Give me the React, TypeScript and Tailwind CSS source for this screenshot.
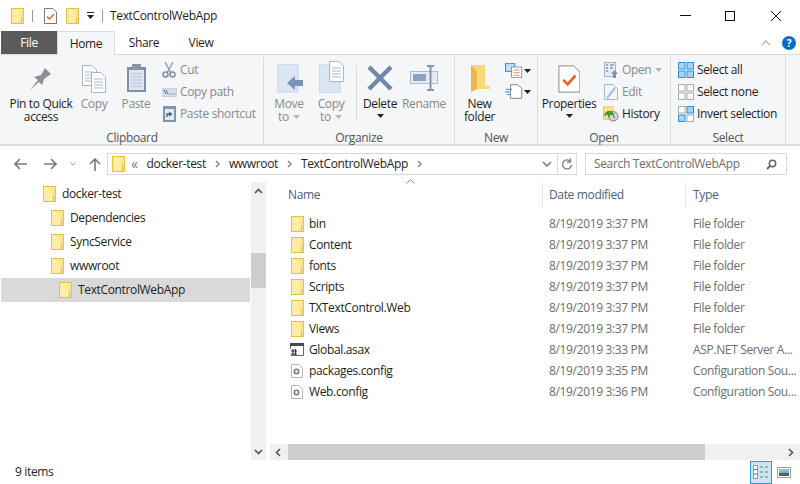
import type { ReactNode } from 'react';

// Explorer window, TextControlWebApp folder

function Folder({ className = '' }: { className?: string }) {
  return (
    <svg width="13" height="16" viewBox="0 0 13 16" className={`shrink-0 ${className}`}>
      <rect x="0.5" y="0.5" width="12" height="15" fill="#fde58f" stroke="#e8c23e" />
      <rect x="1" y="1" width="8" height="14" fill="#fff0b5" opacity="0.6" />
      <path d="M10.5 15V10.5H12.5" fill="none" stroke="#e8c23e" />
    </svg>
  );
}

function Caret({ light }: { light?: boolean }) {
  return (
    <svg width="7" height="4" viewBox="0 0 7 4" className="shrink-0">
      <path d="M0 0H7L3.5 4Z" fill={light ? '#b5b5b5' : '#222'} />
    </svg>
  );
}

function PropsIcon({ size = 1 }: { size?: number }) {
  return (
    <svg width={13 * size} height={16 * size} viewBox="0 0 13 16" className="shrink-0">
      <path d="M.5.5H9L12.5 4V15.5H.5Z" fill="#fff" stroke="#7b7b7b" strokeWidth={size > 1 ? 0.5 : 1} />
      <path d="M3 8.5L5.5 11L10 6" fill="none" stroke="#e8622a" strokeWidth="1.5" />
    </svg>
  );
}

function Sep() {
  return <div className="w-px h-[12px] bg-[#9a9a9a] shrink-0" />;
}

function Doc({ x, y }: { x: number; y: number }) {
  return (
    <g transform={`translate(${x} ${y})`}>
      <path d="M.5.5H10L14.5 5V20.5H.5Z" fill="#fff" stroke="#aab4c2" />
      <path d="M3 7H12M3 10H12M3 13H12M3 16H12" stroke="#aab8cc" />
    </g>
  );
}

function BigTool({
  icon,
  label,
  width,
  dim,
  caret,
}: {
  icon: ReactNode;
  label: ReactNode;
  width: number;
  dim?: boolean;
  caret?: boolean;
}) {
  return (
    <div className="flex flex-col items-center shrink-0" style={{ width }}>
      <div className="h-[34px] flex items-end justify-center">{icon}</div>
      <div className={`mt-[4px] text-center leading-[13px] ${dim ? 'text-[#8a8a8a]' : 'text-[#1e1e1e]'}`}>{label}</div>
      {caret && (
        <div className="h-[12px] flex items-center">
          <Caret />
        </div>
      )}
    </div>
  );
}

function SmallTool({ icon, label, dim }: { icon: ReactNode; label: ReactNode; dim?: boolean }) {
  return (
    <div className={`h-[22px] flex items-center gap-[3px] whitespace-nowrap ${dim ? 'text-[#8a8a8a]' : 'text-[#1e1e1e]'}`}>
      <div className="w-[16px] h-[16px] flex items-center justify-center shrink-0">{icon}</div>
      {label}
    </div>
  );
}

function Group({ label, width, children }: { label: string; width: number; children: ReactNode }) {
  return (
    <div className="flex flex-col shrink-0 border-r border-[#dadbdc] h-[88px] mt-[2px]" style={{ width }}>
      <div className="flex-1 flex items-start pt-[2px] min-h-0">{children}</div>
      <div className="h-[16px] leading-[16px] pt-px text-center text-[#555]">{label}</div>
    </div>
  );
}

function SelectGlyph({ cells }: { cells: boolean[] }) {
  return (
    <svg width="16" height="16" viewBox="0 0 16 16">
      {[
        [0, 0],
        [8.5, 0],
        [0, 8.5],
        [8.5, 8.5],
      ].map(([x, y], i) => (
        <rect
          key={i}
          x={x + 0.5}
          y={y + 0.5}
          width="6.5"
          height="6.5"
          fill={cells[i] ? '#a9d3f5' : '#fff'}
          stroke={cells[i] ? '#2f8fdc' : '#aaa'}
        />
      ))}
    </svg>
  );
}

function Ribbon() {
  return (
    <div className="h-[92px] bg-[#f5f6f7] border-t border-b-2 border-[#dadbdc] flex pl-px shrink-0">
      <Group label="Clipboard" width={263}>
        <div className="flex items-start">
          <div className="w-[4px]" />
          <BigTool
            width={72}
            label={
              <>
                Pin to Quick
                <br />
                access
              </>
            }
            icon={
              <svg width="22" height="24" viewBox="0 0 22 24" className="mb-[2px]">
                <path d="M0 23L8 13L4 10L11 8L15 1L21 7L14 12L12 18L9 15Z" fill="#8c9197" />
              </svg>
            }
          />
          <BigTool
            width={34}
            dim
            label="Copy"
            icon={
              <svg width="25" height="28" viewBox="0 0 25 28">
                <Doc x={0} y={0} />
                <Doc x={9} y={7} />
              </svg>
            }
          />
          <div className="w-[5px]" />
          <BigTool
            width={40}
            dim
            label="Paste"
            icon={
              <svg width="21" height="29" viewBox="0 0 21 29">
                <rect x="1" y="3" width="19" height="25" fill="#7d90a8" />
                <rect x="3" y="6" width="15" height="20" fill="#dfe6f1" />
                <rect x="6" y="0" width="9" height="6" fill="#8c96a3" />
                <path d="M5 10H16M5 13H16M5 16H16M5 19H16M5 22H16" stroke="#b7c4d8" />
              </svg>
            }
          />
          <div className="flex flex-col pl-[5px]">
            <SmallTool
              dim
              label="Cut"
              icon={
                <svg width="14" height="16" viewBox="0 0 14 16">
                  <path d="M3 0L9 11M11 0L5 11" stroke="#99a0a9" strokeWidth="1.5" />
                  <circle cx="3.5" cy="12.5" r="2.5" fill="none" stroke="#7c90ad" strokeWidth="1.5" />
                  <circle cx="10.5" cy="12.5" r="2.5" fill="none" stroke="#7c90ad" strokeWidth="1.5" />
                </svg>
              }
            />
            <SmallTool
              dim
              label="Copy path"
              icon={
                <svg width="15" height="9" viewBox="0 0 15 9">
                  <rect width="15" height="9" fill="#d2dcec" stroke="#b9c5d8" />
                  <path d="M2 2L4 6M4 2L6 6M7.5 6H8.5M10 6H11M12.5 6H13.5" stroke="#5c6c86" />
                </svg>
              }
            />
            <SmallTool
              dim
              label="Paste shortcut"
              icon={
                <svg width="13" height="16" viewBox="0 0 13 16">
                  <rect width="13" height="16" y="0" fill="#8095ae" />
                  <rect x="2" y="3" width="9" height="11" fill="#e4eaf3" />
                  <rect x="4" y="0" width="5" height="3" fill="#8a94a2" />
                  <path d="M4 11V8H7.5M6 6.5L8.5 8L6 10" fill="none" stroke="#46607f" strokeWidth="1.3" />
                </svg>
              }
            />
          </div>
        </div>
      </Group>
      <Group label="Organize" width={191}>
        <div className="flex items-start">
          <div className="w-[2px]" />
          <BigTool
            width={46}
            dim
            label={
              <span className="inline-flex flex-col items-center">
                Move
                <span className="flex items-center gap-[4px]">
                  to
                  <Caret light />
                </span>
              </span>
            }
            icon={
              <svg width="27" height="29" viewBox="0 0 27 29" className="ml-[3px]">
                <rect x="0" y="0" width="21" height="28" fill="#dbe5f3" stroke="#c5d3e6" />
                <path d="M10 19L18 12V16H26V22H18V26Z" fill="#7b93b4" />
              </svg>
            }
          />
          <BigTool
            width={38}
            dim
            label={
              <span className="inline-flex flex-col items-center">
                Copy
                <span className="flex items-center gap-[4px]">
                  to
                  <Caret light />
                </span>
              </span>
            }
            icon={
              <svg width="27" height="32" viewBox="0 0 27 32" className="ml-[2px]">
                <rect x="0" y="4" width="21" height="28" fill="#dbe5f3" stroke="#c5d3e6" />
                <Doc x={10} y={0} />
              </svg>
            }
          />
          <div className="w-[12px] flex justify-center pt-[6px]">
            <div className="w-px h-[56px] bg-[#dadbdc]" />
          </div>
          <BigTool
            width={36}
            label="Delete"
            caret
            icon={
              <svg width="26" height="26" viewBox="0 0 26 26" className="mb-[2px]">
                <path d="M2 2L24 24M24 2L2 24" stroke="#7388a8" strokeWidth="4.5" />
              </svg>
            }
          />
          <BigTool
            width={52}
            dim
            label="Rename"
            icon={
              <svg width="28" height="26" viewBox="0 0 28 26" className="mb-[2px]">
                <rect x="0.5" y="6.5" width="27" height="12" fill="#e3ebf5" stroke="#aebcd0" />
                <rect x="3" y="9" width="13" height="7" fill="#8da2c0" />
                <path d="M17 1H24M20.5 1V25M17 25H24" stroke="#8296b4" strokeWidth="2" />
              </svg>
            }
          />
        </div>
      </Group>
      <Group label="New" width={83}>
        <div className="flex items-start">
          <BigTool
            width={49}
            label={
              <>
                New
                <br />
                folder
              </>
            }
            icon={
              <svg width="20" height="29" viewBox="0 0 20 29" className="ml-[2px]">
                <path d="M0 1H14V22L19 22V25H6L0 28Z" fill="#fbd976" />
                <path d="M0 1L6 7V25L0 28Z" fill="#e9b84c" />
              </svg>
            }
          />
          <div className="flex flex-col gap-[6px] pt-[4px] pl-[1px]">
            <div className="flex items-center gap-[1px]">
              <svg width="18" height="15" viewBox="0 0 21 17">
                <rect x="0.5" y="0.5" width="11" height="9" fill="#bfe0f8" stroke="#2e7fc1" />
                <rect x="7.5" y="4.5" width="12" height="12" fill="#fff" stroke="#888" />
                <path d="M10 8H17M10 11H17M10 14H17" stroke="#d67a7a" />
              </svg>
              <Caret />
            </div>
            <div className="flex items-center gap-[1px]">
              <svg width="18" height="15" viewBox="0 0 21 17">
                <path d="M6.5.5H15L19.5 5V16.5H6.5Z" fill="#fff" stroke="#777" />
                <path d="M1 6H8M0 9H6M2 12H6" stroke="#2e7fc1" />
              </svg>
              <Caret />
            </div>
          </div>
        </div>
      </Group>
      <Group label="Open" width={133}>
        <div className="flex items-start">
          <BigTool width={62} label="Properties" caret icon={<PropsIcon size={1.75} />} />
          <div className="flex flex-col pl-[3px]">
            <SmallTool
              dim
              label={
                <span className="flex items-center gap-[4px]">
                  Open
                  <Caret light />
                </span>
              }
              icon={
                <svg width="14" height="16" viewBox="0 0 14 16">
                  <rect x="0.5" y="0.5" width="11" height="14" fill="#e6ecf5" stroke="#aab4c4" />
                  <path d="M2 3H4M2 6H4M2 9H4M6 3H10M6 6H9" stroke="#8296b4" strokeWidth="1.5" />
                  <path d="M7 12L10.5 8L14 12H12V16H9V12Z" fill="#7c91b1" />
                </svg>
              }
            />
            <SmallTool
              dim
              label="Edit"
              icon={
                <svg width="14" height="16" viewBox="0 0 14 16">
                  <path d="M.5.5H9L13.5 5V15.5H.5Z" fill="#f3f6fb" stroke="#aab4c4" />
                  <path d="M3 14L11 4" stroke="#a9c2e2" strokeWidth="2.5" />
                </svg>
              }
            />
            <SmallTool
              label="History"
              icon={
                <svg width="17" height="16" viewBox="0 0 17 16">
                  <rect x="0.5" y="0.5" width="10" height="13" fill="#fde58f" stroke="#e8c23e" />
                  <circle cx="11" cy="10.5" r="5" fill="#d5d5d5" stroke="#777" />
                  <path d="M11 7.5V10.5L13 12" fill="none" stroke="#555" />
                  <path d="M2 10A5 5 0 0 1 9 6L10 8L5 8L7 11" fill="none" stroke="#3f9a2f" strokeWidth="2" />
                </svg>
              }
            />
          </div>
        </div>
      </Group>
      <Group label="Select" width={115}>
        <div className="flex flex-col pl-[7px]">
          <SmallTool label="Select all" icon={<SelectGlyph cells={[true, true, true, true]} />} />
          <SmallTool label="Select none" icon={<SelectGlyph cells={[false, false, false, false]} />} />
          <SmallTool label="Invert selection" icon={<SelectGlyph cells={[false, true, true, false]} />} />
        </div>
      </Group>
    </div>
  );
}

function Crumb({ label }: { label: string }) {
  return (
    <>
      <span className="mx-[9px] text-[#1e1e1e]">{label}</span>
      <svg width="5" height="8" viewBox="0 0 5 8" className="shrink-0">
        <path d="M1 1L4 4L1 7" fill="none" stroke="#808080" strokeWidth="1.4" />
      </svg>
    </>
  );
}

function NavBar() {
  return (
    <div className="h-[32px] flex items-center shrink-0 pl-[14px] pt-[4px]">
      <svg width="13" height="12" viewBox="0 0 13 12" className="shrink-0">
        <path d="M6 1L1 6L6 11M1 6H13" fill="none" stroke="#7a7a7a" strokeWidth="1.6" />
      </svg>
      <svg width="13" height="12" viewBox="0 0 13 12" className="ml-[17px] shrink-0">
        <path d="M7 1L12 6L7 11M12 6H0" fill="none" stroke="#7a7a7a" strokeWidth="1.6" />
      </svg>
      <svg width="6" height="4" viewBox="0 0 6 4" className="ml-[13px] shrink-0">
        <path d="M.5.5L3 3L5.5.5" fill="none" stroke="#9a9a9a" />
      </svg>
      <svg width="12" height="13" viewBox="0 0 12 13" className="ml-[13px] shrink-0">
        <path d="M1 6L6 1L11 6M6 1V13" fill="none" stroke="#7a7a7a" strokeWidth="1.6" />
      </svg>
      <div className="ml-[6px] w-[470px] h-[22px] border border-[#d9d9d9] flex items-center pl-[4px]">
        <Folder />
        <span className="ml-[6px] text-[#777] text-[14px] leading-none">«</span>
        <Crumb label="docker-test" />
        <Crumb label="wwwroot" />
        <Crumb label="TextControlWebApp" />
        <div className="flex-1" />
        <svg width="10" height="6" viewBox="0 0 10 6" className="shrink-0 mr-[3px]">
          <path d="M1 1L5 5L9 1" fill="none" stroke="#707070" strokeWidth="1.4" />
        </svg>
        <div className="w-px h-full bg-[#d9d9d9] ml-[2px]" />
        <svg width="12" height="13" viewBox="0 0 12 13" className="mx-[3px] shrink-0">
          <path d="M9.5 3.5A4.5 4.5 0 1 0 10.5 7M9.5 0.5V4H6" fill="none" stroke="#808080" strokeWidth="1.4" />
        </svg>
      </div>
      <div className="ml-[8px] w-[202px] h-[22px] border border-[#d9d9d9] flex items-center justify-between pl-[8px] pr-[9px] text-[#6d6d6d]">
        <span>Search TextControlWebApp</span>
        <svg width="11" height="11" viewBox="0 0 11 11" className="shrink-0">
          <circle cx="6.5" cy="4.5" r="3.2" fill="none" stroke="#666" strokeWidth="1.5" />
          <path d="M4 7L1 10" stroke="#666" strokeWidth="2" />
        </svg>
      </div>
    </div>
  );
}

const tree = [
  { name: 'docker-test', pad: 43 },
  { name: 'Dependencies', pad: 51 },
  { name: 'SyncService', pad: 51 },
  { name: 'wwwroot', pad: 51 },
  { name: 'TextControlWebApp', pad: 59, active: true },
];

function TreePane() {
  return (
    <div className="w-[266px] flex shrink-0">
      <div className="w-[250px] pt-[4px] pl-px">
        {tree.map((t) => (
          <div
            key={t.name}
            className={`h-[24px] flex items-center gap-[6px] text-[#1e1e1e] ${t.active ? 'bg-[#d9d9d9]' : ''}`}
            style={{ paddingLeft: t.pad - 1 }}
          >
            <Folder />
            {t.name}
          </div>
        ))}
      </div>
      <div className="w-[15px] ml-px mt-[4px] bg-[#f0f0f0] flex flex-col items-center">
        <svg width="9" height="6" viewBox="0 0 9 6" className="mt-[6px] shrink-0">
          <path d="M1 5L4.5 1.5L8 5" fill="none" stroke="#555" strokeWidth="1.6" />
        </svg>
        <div className="w-full h-[35px] bg-[#cdcdcd] mt-[59px]" />
        <div className="flex-1" />
        <svg width="9" height="6" viewBox="0 0 9 6" className="mb-[5px] shrink-0">
          <path d="M1 1L4.5 4.5L8 1" fill="none" stroke="#555" strokeWidth="1.6" />
        </svg>
      </div>
    </div>
  );
}

function FileIcon({ kind }: { kind: string }) {
  if (kind === 'folder') return <Folder />;
  if (kind === 'asax')
    return (
      <svg width="14" height="13" viewBox="0 0 14 13" className="shrink-0 -ml-[1px]">
        <path d="M.5 12.5H13.5V.5H.5V6" fill="#fff" stroke="#666" />
        <rect x="0" y="0" width="14" height="3" fill="#4a4a4a" />
        <path d="M1 8H7M1 11H7M3 6V12M5.5 6V12" stroke="#333" strokeWidth="1.1" />
      </svg>
    );
  return (
    <svg width="12" height="14" viewBox="0 0 12 14" className="shrink-0 mr-px">
      <path d="M.5.5H8L11.5 4V13.5H.5Z" fill="#fff" stroke="#b5b5b5" />
      <circle cx="5.5" cy="7.5" r="2.2" fill="#fff" stroke="#6f7d8c" strokeWidth="1.6" />
    </svg>
  );
}

const files = [
  { name: 'bin', kind: 'folder', date: '8/19/2019 3:37 PM', type: 'File folder' },
  { name: 'Content', kind: 'folder', date: '8/19/2019 3:37 PM', type: 'File folder' },
  { name: 'fonts', kind: 'folder', date: '8/19/2019 3:37 PM', type: 'File folder' },
  { name: 'Scripts', kind: 'folder', date: '8/19/2019 3:37 PM', type: 'File folder' },
  { name: 'TXTextControl.Web', kind: 'folder', date: '8/19/2019 3:37 PM', type: 'File folder' },
  { name: 'Views', kind: 'folder', date: '8/19/2019 3:37 PM', type: 'File folder' },
  { name: 'Global.asax', kind: 'asax', date: '8/19/2019 3:33 PM', type: 'ASP.NET Server A...' },
  { name: 'packages.config', kind: 'cfg', date: '8/19/2019 3:35 PM', type: 'Configuration Sou...' },
  { name: 'Web.config', kind: 'cfg', date: '8/19/2019 3:36 PM', type: 'Configuration Sou...' },
];

function FileList() {
  return (
    <div className="flex-1 min-w-0 flex flex-col ml-[4px]">
      <div className="flex-1 min-h-0 overflow-hidden">
        <div className="h-[35px] flex flex-col">
          <div className="h-[5px] flex pl-[136px] pt-[1px]">
            <svg width="9" height="5" viewBox="0 0 9 5" className="shrink-0">
              <path d="M.5 4.5L4.5.5L8.5 4.5" fill="none" stroke="#8a8a8a" />
            </svg>
          </div>
          <div className="h-[24px] flex text-[#4c607a] leading-[24px]">
            <div className="w-[273px] pl-[18px] border-r border-[#e5e5e5]">Name</div>
            <div className="w-[143px] pl-[6px] border-r border-[#e5e5e5]">Date modified</div>
            <div className="pl-[7px]">Type</div>
          </div>
        </div>
        {files.map((f) => (
          <div key={f.name} className="h-[21px] flex items-center whitespace-nowrap">
            <div className="w-[274px] flex items-center pl-[21px] gap-[5px] text-[#1e1e1e]">
              <FileIcon kind={f.kind} />
              {f.name}
            </div>
            <div className="w-[144px] pl-[5px] text-[#6d6d6d]">{f.date}</div>
            <div className="pl-[5px] text-[#6d6d6d]">{f.type}</div>
          </div>
        ))}
      </div>
      <div className="h-[16px] bg-[#f0f0f0] flex items-center shrink-0">
        <svg width="6" height="9" viewBox="0 0 6 9" className="ml-[5px] shrink-0">
          <path d="M5 1L1.5 4.5L5 8" fill="none" stroke="#555" strokeWidth="1.6" />
        </svg>
        <div className="h-full w-[417px] bg-[#cdcdcd] ml-[7px]" />
        <div className="flex-1" />
        <svg width="6" height="9" viewBox="0 0 6 9" className="mr-[6px] shrink-0">
          <path d="M1 1L4.5 4.5L1 8" fill="none" stroke="#555" strokeWidth="1.6" />
        </svg>
      </div>
    </div>
  );
}

function StatusBar() {
  return (
    <div className="h-[24px] flex items-center pl-[15px] pr-[7px] shrink-0 text-[#1e1e1e]">
      <span>9 items</span>
      <div className="flex-1" />
      <div className="w-[22px] h-[23px] bg-[#c9e6f7] border border-[#26a0da] flex items-center justify-center">
        <svg width="16" height="14" viewBox="0 0 16 14">
          <rect x="0.5" y="0.5" width="4" height="13" fill="#fff" stroke="#999" />
          <path d="M0 4.5H5M0 9H5M7 2H10M12 2H15M7 7H10M12 7H15M7 12H10M12 12H15" stroke="#777" />
        </svg>
      </div>
      <svg width="14" height="11" viewBox="0 0 14 11" className="ml-[5px] mr-[2px] shrink-0">
        <rect x="0.5" y="0.5" width="13" height="10" fill="#fff" stroke="#a0a0a0" />
        <rect x="2" y="2" width="10" height="3.5" fill="#86bde6" />
        <rect x="2" y="5.5" width="10" height="3.5" fill="#466e55" />
      </svg>
    </div>
  );
}

export default function App() {
  return (
    <div
      className="w-[800px] h-[484px] bg-white flex flex-col overflow-hidden text-[12px] leading-[16px] text-[#1e1e1e]"
      style={{ fontFamily: '"Open Sans", "Liberation Sans", sans-serif', letterSpacing: '-0.35px' }}
    >
      <div className="h-[31px] flex items-center shrink-0 pl-[11px]">
        <Folder />
        <div className="w-[8px]" />
        <Sep />
        <div className="w-[11px]" />
        <PropsIcon />
        <div className="w-[9px]" />
        <Folder />
        <svg width="7" height="7" viewBox="0 0 7 7" className="ml-[8px] shrink-0">
          <path d="M0 0H7V1H0ZM0 3H7L3.5 7Z" fill="#222" />
        </svg>
        <div className="w-[8px]" />
        <Sep />
        <span className="ml-[7px]">TextControlWebApp</span>
        <div className="flex-1" />
        <svg width="11" height="1" viewBox="0 0 11 1" className="shrink-0 mr-[34px]">
          <rect width="11" height="1" fill="#111" />
        </svg>
        <svg width="10" height="10" viewBox="0 0 10 10" className="shrink-0 mr-[36px]">
          <rect x="0.5" y="0.5" width="9" height="9" fill="none" stroke="#111" />
        </svg>
        <svg width="10" height="10" viewBox="0 0 10 10" className="shrink-0 mr-[19px]">
          <path d="M0 0L10 10M10 0L0 10" stroke="#111" />
        </svg>
      </div>
      <div className="h-[23px] flex items-stretch shrink-0 pl-px">
        <div className="w-[56px] bg-[#5b5b5b] text-white flex items-center justify-center">File</div>
        <div className="w-[58px] bg-[#f5f6f7] border-x border-t border-[#dadbdc] flex items-center justify-center -mb-px z-10">
          Home
        </div>
        <div className="w-[58px] flex items-center justify-center">Share</div>
        <div className="w-[56px] flex items-center justify-center">View</div>
        <div className="flex-1" />
        <div className="flex items-center pr-[4px]">
          <svg width="10" height="6" viewBox="0 0 10 6" className="mr-[11px] shrink-0">
            <path d="M1 5L5 1L9 5" fill="none" stroke="#b5b5b5" strokeWidth="1.3" />
          </svg>
          <div className="w-[14px] h-[14px] rounded-full bg-[#0c6cc4] text-white text-[10px] font-bold leading-none flex items-center justify-center">
            ?
          </div>
        </div>
      </div>
      <Ribbon />
      <NavBar />
      <div className="flex-1 min-h-0 flex">
        <TreePane />
        <FileList />
      </div>
      <StatusBar />
    </div>
  );
}
